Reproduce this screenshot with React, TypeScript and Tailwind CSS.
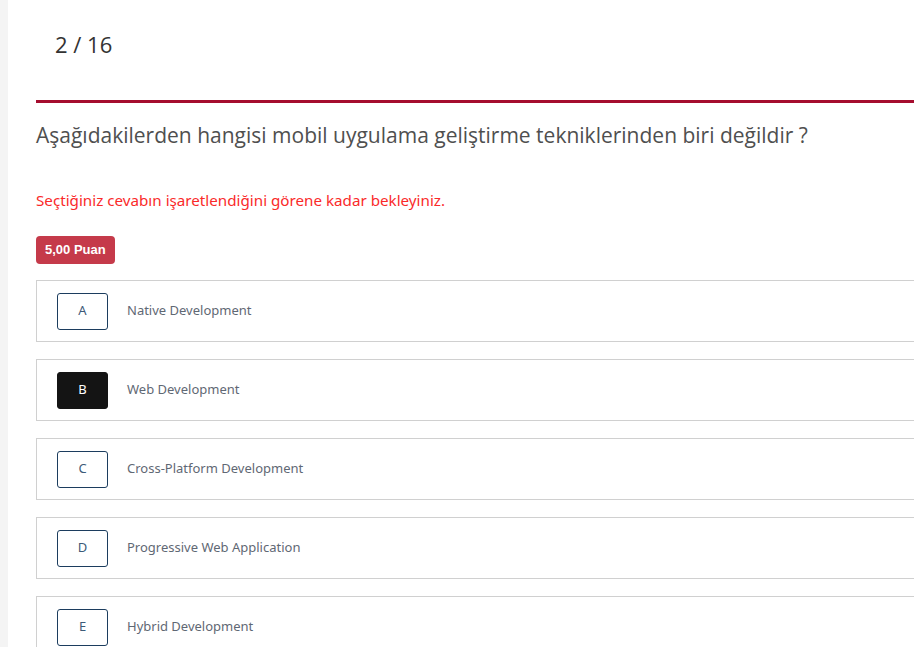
import React from "react";

const options = [
  { l: "A", t: "Native Development", sel: false },
  { l: "B", t: "Web Development", sel: true },
  { l: "C", t: "Cross-Platform Development", sel: false },
  { l: "D", t: "Progressive Web Application", sel: false },
  { l: "E", t: "Hybrid Development", sel: false },
];

export default function App() {
  return (
    <div className="flex w-[914px] h-[647px] overflow-hidden bg-white">
      <div className="w-2 shrink-0 bg-[#f4f4f4]" />
      <div className="w-[920px] shrink-0 pl-[28px]">
        <div className="h-[100px] pl-[19px] pt-[29px]">
          <span className="text-[22px] leading-[30px] text-[#333] [font-family:'Open_Sans',sans-serif]">2 / 16</span>
        </div>
        <div className="h-[3px] bg-[#a50d2e]" />
        <div className="pt-[17px] text-[21px] leading-[30px] text-[#4f4f4f] [font-family:'Open_Sans',sans-serif]">
          Aşağıdakilerden hangisi mobil uygulama geliştirme tekniklerinden biri değildir ?
        </div>
        <div className="mt-[40px] text-[15.2px] leading-[20px] text-[#fa2a2a] [font-family:'Noto_Sans',sans-serif]">
          Seçtiğiniz cevabın işaretlendiğini görene kadar bekleyiniz.
        </div>
        <div className="mt-[26px] inline-flex h-[28px] items-center rounded-[4px] bg-[#c53a4a] px-[9px] text-[13px] font-bold text-white [font-family:'Liberation_Sans',sans-serif]">
          5,00 Puan
        </div>
        <div className="mt-[16px] flex flex-col gap-[17px]">
          {options.map((o) => (
            <div key={o.l} className="flex h-[62px] items-center border border-[#d0d0d0] pl-[20px]">
              <div
                className={
                  "flex h-[37px] w-[51px] items-center justify-center rounded-[3px] border text-[13px] [font-family:'Noto_Sans',sans-serif] " +
                  (o.sel ? "border-[#141414] bg-[#141414] text-white" : "border-[#1c3d5e] text-[#3d5a78]")
                }
              >
                {o.l}
              </div>
              <div className="ml-[19px] text-[13px] text-[#5f6874] [font-family:'Noto_Sans',sans-serif]">{o.t}</div>
            </div>
          ))}
        </div>
      </div>
    </div>
  );
}
